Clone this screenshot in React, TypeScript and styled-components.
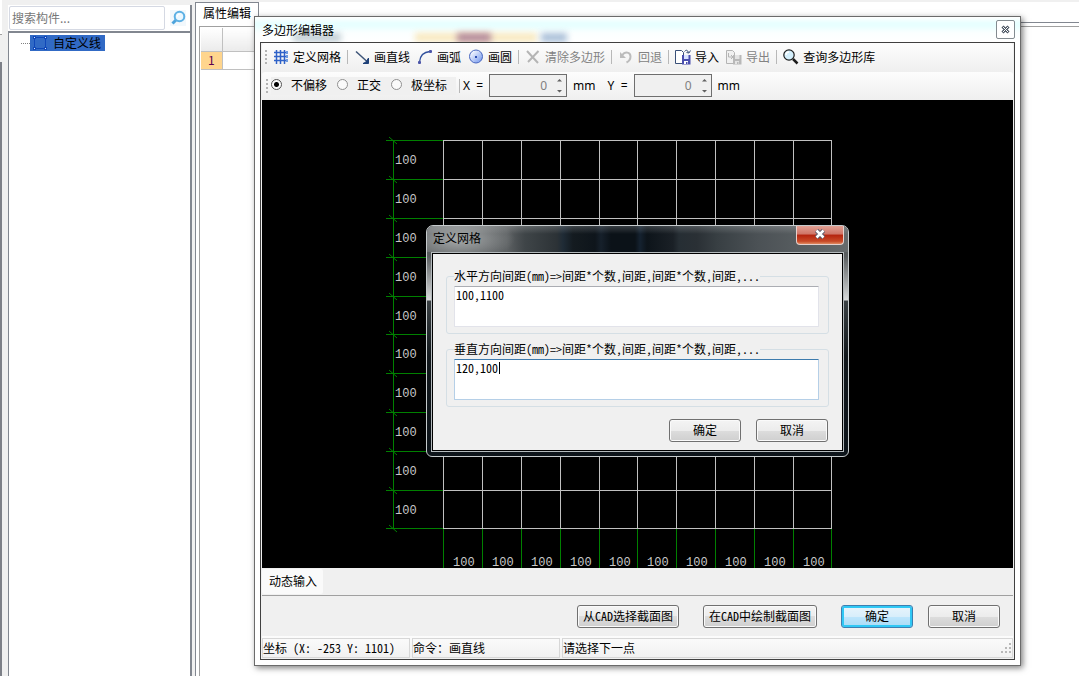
import React, { useState } from "react";
import styled, { createGlobalStyle, css } from "styled-components";

const uiFont = `"Noto Sans CJK SC", sans-serif`;
const songFont = `"Noto Sans Mono CJK SC", "Noto Sans CJK SC", monospace`;

const GlobalStyle = createGlobalStyle`
  *, *::before, *::after { box-sizing: border-box; }
  html, body, #root { height: 100%; }
  body {
    margin: 0;
    overflow: hidden;
    background: #f0f0f0;
    color: #000;
    font: 12px/16px ${uiFont};
  }
  button, input, textarea { font: inherit; color: inherit; }
`;

/* ---------- main window behind the editor ---------- */

const Desktop = styled.div`
  position: relative;
  display: flex;
  height: 100vh;
  overflow: hidden;
`;

const DockEdge = styled.div`
  width: 2px;
  margin-right: 6px;
  background: linear-gradient(#fff 34px, #a0a0a0 34px 35px, #f0f0f0 35px 62px, #7d8088 62px);
`;

const ComponentPanel = styled.aside`
  display: flex;
  flex-direction: column;
  width: 184px;
  margin-top: 5px;
  margin-right: 3px;
  background: #fff;
  border-right: 2px solid #828790;
`;

const SearchBar = styled.form`
  display: flex;
  align-items: center;
  gap: 5px;
  height: 26px;
  padding: 1px 4px 1px 1px;
`;

const SearchInput = styled.input`
  flex: 1;
  min-width: 0;
  height: 24px;
  padding: 0 2px 2px;
  border: 1px solid #d5d9e3;
  border-radius: 2px;
  background: #fff;
  outline: none;
  &::placeholder { color: #777; opacity: 1; }
`;

const IconButton = styled.button`
  display: flex;
  padding: 0;
  border: 0;
  background: #f2f8fc;
`;

const Tree = styled.ul`
  flex: 1;
  margin: 0;
  padding: 2px 0 0 12px;
  list-style: none;
  border-top: 2px solid #828790;
  border-left: 1px solid #828790;
`;

const TreeItem = styled.li`
  display: flex;
  align-items: center;
  &::before {
    content: "";
    width: 9px;
    border-top: 1px dotted #808080;
  }
`;

const TreeLabel = styled.button`
  display: flex;
  align-items: center;
  gap: 5px;
  height: 16px;
  padding: 0 4px 0 2px;
  border: 0;
  background: #316ac5;
`;

const PropertyPanel = styled.main`
  flex: 1;
  display: flex;
  flex-direction: column;
  margin-top: 2px;
  background: #fff;
  border-left: 1px solid #828790;
`;

const TabStrip = styled.div`
  display: flex;
  height: 21px;
  border-bottom: 1px solid #828790;
`;

const PropertyTab = styled.button`
  height: 21px;
  padding: 0 7px 1px;
  border: 1px solid #828790;
  border-width: 1px 1px 0 0;
  background: #fff;
`;

const PropertyBody = styled.div`
  flex: 1;
  margin: 3px 0 0 3px;
  padding: 1px;
  border-top: 1px solid #a0a0a0;
  border-left: 1px solid #a0a0a0;
`;

const PropertyTable = styled.table`
  width: 50%;
  border-collapse: collapse;
  table-layout: fixed;
  th, td {
    padding: 0;
    border: 1px solid #c0c0c0;
    border-width: 0 1px 1px 0;
    font-weight: normal;
  }
  th:first-child { width: 21px; }
  thead th { height: 23px; background: linear-gradient(#fff, #ebebeb); }
  tbody th { height: 18px; background: #ffd58d; color: #5a0050; }
`;

/* ---------- polygon editor window ---------- */

const EditorWindow = styled.section`
  position: absolute;
  inset: 16px 58px 10px 254px;
  display: flex;
  flex-direction: column;
  padding: 0 5px 5px;
  border: 1px solid #6b6b6b;
  background: #fff;
  box-shadow: 2px 2px 6px rgba(0, 0, 0, 0.5);
`;

const TitleBar = styled.header`
  position: relative;
  display: flex;
  align-items: center;
  justify-content: space-between;
  height: 25px;
  margin: 0 -5px;
  padding: 0 5px 0 7px;
  overflow: hidden;
  background: linear-gradient(#fff, #e8ffff 6px 9px, #fbffff 16px, #fff);
`;

const Title = styled.h1`
  position: relative;
  margin: 0;
  font-size: 12px;
  font-weight: normal;
`;

const GlassGhost = styled.span<{ $left: number; $width: number; $color: string }>`
  position: absolute;
  bottom: 0;
  left: ${(p) => p.$left}px;
  width: ${(p) => p.$width}px;
  height: 9px;
  background: ${(p) => p.$color};
  filter: blur(3px);
`;

const WindowClose = styled.button`
  position: relative;
  display: flex;
  align-items: center;
  justify-content: center;
  width: 19px;
  height: 19px;
  padding: 0;
  border: 1px solid #838b90;
  border-radius: 2px;
  background: #fff;
`;

const EditorFrame = styled.div`
  flex: 1;
  display: flex;
  flex-direction: column;
  min-height: 0;
  padding: 0 1px;
  border: 1px solid #404040;
  background: #f0f0f0;
`;

const Toolbar = styled.div`
  display: flex;
  align-items: center;
  gap: 6px;
  height: 29px;
  padding: 0 0 2px 3px;
  border-radius: 3px;
  background: linear-gradient(#fdfdfd, #efefef);
  white-space: nowrap;
`;

const OptionBar = styled(Toolbar)`
  gap: 3px;
  height: 28px;
  padding: 0 0 1px 4px;
`;

const Grip = styled.span`
  width: 2px;
  height: 14px;
  background: repeating-linear-gradient(#b4b4b4 0 2px, transparent 2px 4px);
`;

const ToolGroup = styled.div`
  display: flex;
  gap: 7px;
`;

const ToolButton = styled.button`
  display: flex;
  align-items: center;
  gap: 4px;
  padding: 0;
  border: 0;
  background: none;
  &:disabled { color: #838383; }
`;

const Divider = styled.span`
  width: 1px;
  height: 14px;
  background: #b8b8b8;
`;

const ModeGroup = styled.div`
  display: flex;
  align-items: center;
  gap: 10px;
  height: 18px;
  padding: 0 9px 2px 0;
  background: #f0f0f0;
`;

const RadioLabel = styled.label`
  display: flex;
  align-items: center;
  gap: 9px;
`;

const Radio = styled.input`
  appearance: none;
  width: 11px;
  height: 11px;
  margin: 0;
  border: 1px solid #909090;
  border-radius: 50%;
  background: #fafafa;
  &:checked {
    border-color: #555;
    background: radial-gradient(circle, #000 2px, #fafafa 3px);
  }
`;

const CoordField = styled.label`
  display: flex;
  align-items: center;
  gap: 6px;
  margin-right: 9px;
  font-family: "Noto Sans", sans-serif;
`;

const AxisName = styled.span`
  display: flex;
  justify-content: space-between;
  width: 20px;
`;

const SpinBox = styled.span`
  display: flex;
  align-items: center;
  width: 78px;
  height: 23px;
  padding-right: 3px;
  border: 1px solid #6e6e6e;
  background: #f0f0f0;
`;

const SpinInput = styled.input`
  flex: 1;
  min-width: 0;
  padding: 0 9px 0 0;
  border: 0;
  outline: none;
  background: none;
  color: #808080;
  text-align: right;
  appearance: textfield;
  &::-webkit-inner-spin-button { appearance: none; margin: 0; }
`;

const CanvasArea = styled.div`
  position: relative;
  flex: 1;
  min-height: 0;
  background: #000;
`;

const Drawing = styled.svg`
  display: block;
  width: 100%;
  height: 100%;
  text {
    fill: #c8c8c8;
    font: 12px "Liberation Mono", monospace;
  }
`;

const InputStrip = styled.div`
  display: flex;
  height: 28px;
  padding: 1px 0;
  border-bottom: 1px solid #a0a0a0;
`;

const StripButton = styled.button`
  padding: 0 6px 2px 7px;
  border: 0;
  border-radius: 2px;
  background: #fafafa;
`;

const Actions = styled.div<{ $inDialog?: boolean }>`
  display: flex;
  justify-content: flex-end;
  gap: ${(p) => (p.$inDialog ? 15 : 24)}px;
  padding: ${(p) => (p.$inDialog ? "12px 1px 8px" : "9px 13px 8px")};
`;

const ActionPair = styled.div`
  display: flex;
  gap: 15px;
`;

const PushButton = styled.button<{ $primary?: boolean }>`
  min-width: 72px;
  height: 23px;
  padding: 0 5px 2px;
  border: 1px solid #707070;
  border-radius: 3px;
  background: linear-gradient(#f4f4f4, #ececec 50%, #dddddd 50%, #cfcfcf);
  box-shadow: inset 0 0 0 1px #fafafa;
  font-family: ${songFont};
  line-height: 16px;
  ${(p) =>
    p.$primary &&
    css`
      border-color: #3c7fb1;
      background: linear-gradient(#e8f5fc, #d8eefb 50%, #bee6fd 50%, #a9dbf5);
      box-shadow: inset 0 0 0 2px #30c8f5;
    `}
`;

const StatusBar = styled.footer`
  display: flex;
  gap: 2px;
  height: 23px;
  padding: 2px 0 1px;
  background: linear-gradient(#fcfcfc, #f0f0f0);
  font-family: ${songFont};
`;

const StatusCell = styled.div<{ $grow?: boolean }>`
  display: flex;
  align-items: center;
  justify-content: space-between;
  flex: ${(p) => (p.$grow ? "1" : "0 0 148px")};
  padding: 0 0 1px;
  border: 1px solid #d7d7d7;
  white-space: pre;
`;

/* ---------- grid dialog ---------- */

const Dialog = styled.section`
  position: absolute;
  left: 164px;
  top: 125px;
  width: 423px;
  padding: 0 4px 4px;
  border: 1px solid #c5cacc;
  border-radius: 7px 7px 6px 6px;
  background: linear-gradient(#4c5052, #5a5e60 30px, #d8dadb 74px, #3b4144 75px, #12181c 130px, #0d141a);
`;

const DialogTitleBar = styled.header`
  display: flex;
  align-items: flex-start;
  justify-content: space-between;
  height: 26px;
  margin: 0 -4px;
  border-radius: 6px 6px 0 0;
  background:
    linear-gradient(rgba(255, 255, 255, 0.18), rgba(255, 255, 255, 0) 8px),
    radial-gradient(ellipse 56px 22px at 32px 13px, rgba(175, 178, 179, 0.9), rgba(150, 153, 154, 0.6) 55%, transparent),
    linear-gradient(90deg, #606466, #5d6163 80px, #484d50 92px, #3f4548 98px, #2c3236 130px, #1f2b36 136px,
      #141b20 146px, #0e151b 168px, #16202b 174px, #0b1218 184px, #0b1218 208px, #152230 213px, #0d141a 220px,
      #1a2026 246px, #262e34 252px, #2a3035 270px, #383f43 290px, #4b5155 330px, #666b6d);
`;

const DialogTitle = styled.h2`
  margin: 4px 6px;
  font-size: 12px;
  font-weight: normal;
`;

const DialogClose = styled.button`
  display: flex;
  align-items: center;
  justify-content: center;
  width: 48px;
  height: 19px;
  margin: 0 4px 0 0;
  padding: 0 0 2px;
  border: 1px solid #e6d0cc;
  border-top: 0;
  border-radius: 0 0 4px 4px;
  background: linear-gradient(#e2a094, #cf7466 45%, #b4230e 50%, #c84a28 85%, #e08a60);
`;

const DialogClient = styled.div`
  padding: 15px 13px 0;
  border: 1px solid #000;
  outline: 1px solid #b4babd;
  margin: 1px;
  background: #f0f0f0;
  font-family: ${songFont};
`;

const Group = styled.fieldset`
  min-width: 0;
  margin: 0 0 8px;
  padding: 3px 9px 6px 7px;
  border: 1px solid #d5dfe5;
  border-radius: 3px;
  &:last-of-type { margin-bottom: 0; }
`;

const Legend = styled.legend`
  padding: 0;
  line-height: 14px;
  white-space: nowrap;
`;

const TextWrap = styled.div`
  position: relative;
`;

const SpacingText = styled.textarea<{ $active?: boolean }>`
  display: block;
  width: 100%;
  height: 41px;
  padding: 0 1px;
  resize: none;
  outline: none;
  border: 1px solid #e2e3ea;
  border-top-color: #abadb3;
  border-radius: 1px;
  background: #fff;
  line-height: 15px;
  ${(p) =>
    p.$active &&
    css`
      border-color: #b5cfe7;
      border-top-color: #3d7bad;
    `}
`;

const Caret = styled.span`
  position: absolute;
  top: 3px;
  left: 45px;
  width: 1px;
  height: 12px;
  background: #000;
`;

/* ---------- icons ---------- */

const Icon = ({ children, size = 16 }: { children: React.ReactNode; size?: number }) => (
  <svg width={size} height={size} viewBox={`0 0 ${size} ${size}`} fill="none" aria-hidden="true">
    {children}
  </svg>
);

const SearchIcon = () => (
  <Icon>
    <path d="M7 9 2.500 13.500" stroke="#4ea4dc" strokeWidth="3" />
    <circle cx="9.500" cy="6.500" r="4.800" fill="#eaf7ff" stroke="#5cb0e4" strokeWidth="2" />
    <path d="M7 7q0-3 3-3" stroke="#fff" />
  </Icon>
);

const PolygonIcon = () => (
  <Icon>
    <path d="M3 2.500h10M3 13.500h10M2.500 3v10M13.500 3v10" stroke="#1048b8" />
    <g fill="#d8e8ff" stroke="#1048b8">
      <rect x="1.500" y="1.500" width="2" height="2" />
      <rect x="12.500" y="1.500" width="2" height="2" />
      <rect x="1.500" y="12.500" width="2" height="2" />
      <rect x="12.500" y="12.500" width="2" height="2" />
    </g>
  </Icon>
);

const GridIcon = () => (
  <Icon>
    <path d="M3.500 1v14M7.500 1v14M11.500 1v14" stroke="#2f62c8" strokeWidth="1.500" />
    <path d="M1 3.500h14M1 7.500h14M1 11.500h14" stroke="#2f62c8" strokeWidth="1.500" />
    <path d="M14 2v3M14 6v3M14 10v3" stroke="#6e9be0" strokeWidth="2" />
  </Icon>
);

const LineIcon = () => (
  <Icon>
    <path d="m2 2.500 11 10" stroke="#3d5478" strokeWidth="1.500" />
    <path d="M14.500 9v5.500H9l3-1.500z" fill="#1d3f77" stroke="#1d3f77" />
  </Icon>
);

const ArcIcon = () => (
  <Icon>
    <path d="M2.500 13C3 7 7 3 13 2.500" stroke="#30509c" strokeWidth="1.300" />
    <rect x="1" y="12" width="3" height="3" rx="1" fill="#4c55a8" />
    <rect x="12" y="1" width="3" height="3" rx="1" fill="#4c55a8" />
  </Icon>
);

const CircleIcon = () => (
  <Icon>
    <defs>
      <linearGradient id="disc" x1="0" y1="0" x2="1" y2="1">
        <stop offset="0.100" stopColor="#fff" />
        <stop offset="1" stopColor="#6a90ec" />
      </linearGradient>
    </defs>
    <circle cx="8" cy="7.500" r="6.500" fill="url(#disc)" stroke="#4766c0" />
    <rect x="7" y="7" width="2" height="2" fill="#2d4db0" />
  </Icon>
);

const ClearIcon = () => (
  <Icon>
    <path d="m2 2 11 12M13.500 2 3 13" stroke="#b5b5b5" strokeWidth="2" />
  </Icon>
);

const UndoIcon = () => (
  <Icon>
    <path d="M4 6.500C7 2 12.500 3 12.500 7.500c0 3-2 5-4 6" stroke="#bcbcbc" strokeWidth="2" />
    <path d="M2 3v6h6z" fill="#bcbcbc" />
  </Icon>
);

const FileTransferIcon = ({ off }: { off?: boolean }) => {
  const ink = off ? "#b4b4b4" : "#3a5078";
  const disk = off ? "#b8b8b8" : "#4a4fae";
  return (
    <Icon>
      <path d="M.5 1.500h6l2 2v11h-8z" fill={off ? "#f0f0f0" : "#fff"} stroke={ink} />
      {off ? (
        <path d="M2.500 4v4h4M5 6l2 2-2 2" stroke={ink} />
      ) : (
        <path d="M9.500 2.500q2.500-3 4 1M11.500 3.500 14 4l1.500-2.500" stroke={ink} />
      )}
      <path d="M7 6h8.500v9.500H7z" fill={disk} />
      <path d="M9 6h4.500v4H9z" fill={off ? "#e4e4e4" : "#d9e2ff"} />
      <path d="M9 12h4v3H9z" fill={off ? "#e4e4e4" : "#fff"} />
      <path d="M11 13h1.500v2H11z" fill={disk} />
    </Icon>
  );
};

const LookupIcon = () => (
  <Icon>
    <circle cx="6" cy="6" r="5.200" fill="#d4effc" stroke="#1c1c1c" strokeWidth="1.200" />
    <path d="M3 6q0-3 3-3" stroke="#fff" strokeWidth="1.500" />
    <path d="m10 10 4.500 4.500" stroke="#1c1c1c" strokeWidth="2.500" />
  </Icon>
);

const SmallCloseIcon = () => (
  <Icon size={9}>
    <path d="m1.500 1.500 6 6M7.500 1.500l-6 6" stroke="#4c5663" strokeWidth="3" />
    <path d="m2 2 5 5M7 2 2 7" stroke="#fff" strokeWidth="1" />
  </Icon>
);

const DialogCloseIcon = () => (
  <svg width="12" height="10" viewBox="0 0 12 10" fill="none" aria-hidden="true">
    <path d="m2.500 1.500 7 7M9.500 1.500l-7 7" stroke="#56586a" strokeWidth="4.500" />
    <path d="m2.500 1.500 7 7M9.500 1.500l-7 7" stroke="#fff" strokeWidth="2.500" />
  </svg>
);

const SpinArrows = () => (
  <svg width="7" height="17" viewBox="0 0 7 17" aria-hidden="true">
    <path d="M1 4.500h5L3.500 2zM1 13h5l-2.500 2.500z" fill="#606060" />
  </svg>
);

const SizeGrip = () => (
  <svg width="12" height="12" viewBox="0 0 12 12" fill="#b8b8b8" aria-hidden="true">
    <path d="M9 1h2v2H9zM5 5h2v2H5zM9 5h2v2H9zM1 9h2v2H1zM5 9h2v2H5zM9 9h2v2H9z" />
  </svg>
);

/* ---------- drawing ---------- */

const CELLS = 10;
const ORIGIN = { x: 181, y: 40 };
const PITCH = 38.8;
const at = (start: number, i: number) => Math.ceil(start + PITCH * i);

const GridDrawing = () => {
  const stops = Array.from({ length: CELLS + 1 }, (_, i) => i);
  const right = at(ORIGIN.x, CELLS) + 1;
  const bottom = at(ORIGIN.y, CELLS) + 1;
  return (
    <Drawing role="img" aria-label="网格">
      <g fill="#008000">
        <rect x="131" y={ORIGIN.y} width="1" height={bottom - ORIGIN.y} />
        {stops.map((i) => (
          <React.Fragment key={i}>
            <rect x="124" y={at(ORIGIN.y, i)} width="57" height="1" />
            <rect x={at(ORIGIN.x, i)} y={bottom} width="1" height="100%" />
            <path d={`M127 ${at(ORIGIN.y, i) - 3}l8 7`} stroke="#008000" />
          </React.Fragment>
        ))}
      </g>
      <g fill="#c0c0c0">
        {stops.map((i) => (
          <React.Fragment key={i}>
            <rect x={ORIGIN.x} y={at(ORIGIN.y, i)} width={right - ORIGIN.x} height="1" />
            <rect x={at(ORIGIN.x, i)} y={ORIGIN.y} width="1" height={bottom - ORIGIN.y} />
          </React.Fragment>
        ))}
      </g>
      {stops.slice(0, CELLS).map((i) => (
        <React.Fragment key={i}>
          <text x="133" y={at(ORIGIN.y, i) + 24}>100</text>
          <text x={at(ORIGIN.x, i) + 10} y={bottom + 37}>100</text>
        </React.Fragment>
      ))}
    </Drawing>
  );
};

/* ---------- composed parts ---------- */

const Tool = ({ icon, label, disabled }: { icon: React.ReactNode; label: string; disabled?: boolean }) => (
  <ToolButton type="button" disabled={disabled}>
    {icon}
    {label}
  </ToolButton>
);

const Coordinate = ({ axis }: { axis: string }) => (
  <CoordField>
    <AxisName>
      <span>{axis}</span>
      <span>=</span>
    </AxisName>
    <SpinBox>
      <SpinInput type="number" defaultValue={0} />
      <SpinArrows />
    </SpinBox>
    mm
  </CoordField>
);

const MODES = ["不偏移", "正交", "极坐标"];

const SpacingGroup = ({ direction, value, active }: { direction: string; value: string; active?: boolean }) => {
  const [text, setText] = useState(value);
  const caption = `${direction}方向间距(mm)=>间距*个数,间距,间距*个数,间距,...`;
  return (
    <Group>
      <Legend>{caption}</Legend>
      <TextWrap>
        <SpacingText
          aria-label={caption}
          spellCheck={false}
          $active={active}
          value={text}
          onChange={(e) => setText(e.target.value)}
        />
        {active && <Caret />}
      </TextWrap>
    </Group>
  );
};

export default function App() {
  const [mode, setMode] = useState(MODES[0]);
  return (
    <Desktop>
      <GlobalStyle />
      <DockEdge />
      <ComponentPanel>
        <SearchBar onSubmit={(e) => e.preventDefault()}>
          <SearchInput type="text" placeholder="搜索构件..." aria-label="搜索构件" />
          <IconButton type="submit" aria-label="搜索">
            <SearchIcon />
          </IconButton>
        </SearchBar>
        <Tree>
          <TreeItem>
            <TreeLabel type="button">
              <PolygonIcon />
              自定义线
            </TreeLabel>
          </TreeItem>
        </Tree>
      </ComponentPanel>
      <PropertyPanel>
        <TabStrip>
          <PropertyTab type="button">属性编辑</PropertyTab>
        </TabStrip>
        <PropertyBody>
          <PropertyTable>
            <thead>
              <tr>
                <th />
                <th />
              </tr>
            </thead>
            <tbody>
              <tr>
                <th scope="row">1</th>
                <td />
              </tr>
            </tbody>
          </PropertyTable>
        </PropertyBody>
      </PropertyPanel>

      <EditorWindow aria-label="多边形编辑器">
        <TitleBar>
          <GlassGhost $left={38} $width={48} $color="#c3d0d6" />
          <GlassGhost $left={160} $width={122} $color="#f8e9bf" />
          <GlassGhost $left={202} $width={34} $color="#b48a9c" />
          <GlassGhost $left={286} $width={26} $color="#a9bfd8" />
          <Title>多边形编辑器</Title>
          <WindowClose type="button" aria-label="关闭">
            <SmallCloseIcon />
          </WindowClose>
        </TitleBar>
        <EditorFrame>
          <Toolbar>
            <Grip />
            <Tool icon={<GridIcon />} label="定义网格" />
            <Divider />
            <ToolGroup>
              <Tool icon={<LineIcon />} label="画直线" />
              <Tool icon={<ArcIcon />} label="画弧" />
              <Tool icon={<CircleIcon />} label="画圆" />
            </ToolGroup>
            <Divider />
            <Tool icon={<ClearIcon />} label="清除多边形" disabled />
            <Divider />
            <Tool icon={<UndoIcon />} label="回退" disabled />
            <Divider />
            <ToolGroup>
              <Tool icon={<FileTransferIcon />} label="导入" />
              <Tool icon={<FileTransferIcon off />} label="导出" disabled />
            </ToolGroup>
            <Divider />
            <Tool icon={<LookupIcon />} label="查询多边形库" />
          </Toolbar>
          <OptionBar>
            <Grip />
            <ModeGroup role="radiogroup">
              {MODES.map((m) => (
                <RadioLabel key={m}>
                  <Radio type="radio" name="mode" checked={mode === m} onChange={() => setMode(m)} />
                  {m}
                </RadioLabel>
              ))}
            </ModeGroup>
            <Divider />
            <Coordinate axis="X" />
            <Coordinate axis="Y" />
          </OptionBar>
          <CanvasArea>
            <GridDrawing />
            <Dialog role="dialog" aria-label="定义网格">
              <DialogTitleBar>
                <DialogTitle>定义网格</DialogTitle>
                <DialogClose type="button" aria-label="关闭">
                  <DialogCloseIcon />
                </DialogClose>
              </DialogTitleBar>
              <DialogClient>
                <SpacingGroup direction="水平" value="100,1100" />
                <SpacingGroup direction="垂直" value="120,100" active />
                <Actions $inDialog>
                  <PushButton type="button">确定</PushButton>
                  <PushButton type="button">取消</PushButton>
                </Actions>
              </DialogClient>
            </Dialog>
          </CanvasArea>
          <InputStrip>
            <StripButton type="button">动态输入</StripButton>
          </InputStrip>
          <Actions>
            <PushButton type="button">从CAD选择截面图</PushButton>
            <PushButton type="button">在CAD中绘制截面图</PushButton>
            <ActionPair>
              <PushButton type="button" $primary>确定</PushButton>
              <PushButton type="button">取消</PushButton>
            </ActionPair>
          </Actions>
          <StatusBar>
            <StatusCell>坐标 (X: -253 Y: 1101)</StatusCell>
            <StatusCell>命令：画直线</StatusCell>
            <StatusCell $grow>
              请选择下一点
              <SizeGrip />
            </StatusCell>
          </StatusBar>
        </EditorFrame>
      </EditorWindow>
    </Desktop>
  );
}
